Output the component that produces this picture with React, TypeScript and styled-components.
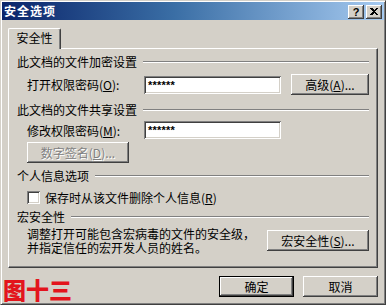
import styled, { createGlobalStyle } from "styled-components";

const FACE = "#d4d0c8";
const SHADOW = "#808080";
const DARK = "#404040";

const raised = `inset -1px -1px ${DARK}, inset 1px 1px #fff, inset -2px -2px ${SHADOW}, inset 2px 2px ${FACE}`;
const sunken = `inset 1px 1px ${SHADOW}, inset -1px -1px #fff, inset 2px 2px ${DARK}, inset -2px -2px ${FACE}`;

const GlobalStyle = createGlobalStyle`
  html, body {
    margin: 0;
    padding: 0;
    background: ${FACE};
  }

  * {
    box-sizing: border-box;
  }
`;

const Window = styled.div`
  width: 386px;
  height: 305px;
  overflow: hidden;
  background: ${FACE};
  border: 1px solid;
  border-color: ${FACE} ${DARK} ${DARK} ${FACE};
  box-shadow: inset 1px 1px #fff, inset -1px -1px ${SHADOW};
  padding: 1px;
  display: flex;
  flex-direction: column;
  font-family: "Noto Sans CJK SC", "Liberation Sans", sans-serif;
  font-size: 12px;
  color: #000;
`;

const TitleBar = styled.div`
  height: 18px;
  flex-shrink: 0;
  display: flex;
  align-items: flex-start;
  padding-left: 2px;
  padding-right: 2px;
  background: linear-gradient(to right, #0a246a 0%, #3a6ea5 45%, #a6caf0 100%);
`;

const Title = styled.span`
  color: #fff;
  font-weight: bold;
  font-size: 12px;
  letter-spacing: 1px;
  line-height: 18px;
`;

const CaptionButtons = styled.div`
  margin-left: auto;
  margin-top: 3px;
  display: flex;
  gap: 2px;
`;

const CaptionButton = styled.div`
  width: 16px;
  height: 14px;
  background: ${FACE};
  box-shadow: ${raised};
  display: flex;
  align-items: center;
  justify-content: center;
  font-family: "Liberation Sans", sans-serif;
  font-weight: bold;
  font-size: 11px;
  line-height: 14px;
  padding-bottom: 1px;
`;

const Body = styled.div`
  flex: 1;
  display: flex;
  flex-direction: column;
  padding: 0 6px;
`;

const TabStrip = styled.div`
  margin-top: 8px;
  display: flex;
  position: relative;
  z-index: 1;
`;

const Tab = styled.div`
  width: 53px;
  height: 21px;
  margin-bottom: -1px;
  background: ${FACE};
  border-top: 1px solid #fff;
  border-left: 1px solid #fff;
  border-right: 1px solid ${DARK};
  border-top-left-radius: 2px;
  border-top-right-radius: 2px;
  box-shadow: inset -1px 0 ${SHADOW};
  display: flex;
  justify-content: center;
  padding-top: 2px;
  line-height: 14px;
`;

const Panel = styled.div`
  height: 220px;
  border-top: 1px solid #fff;
  border-left: 1px solid #fff;
  border-right: 1px solid ${DARK};
  border-bottom: 1px solid ${DARK};
  box-shadow: inset -1px -1px ${SHADOW};
  padding: 6px 8px 0 8px;
  display: flex;
  flex-direction: column;
`;

const GroupHeader = styled.div<{ $gap: number }>`
  height: 14px;
  margin-top: ${(p) => p.$gap}px;
  display: flex;
  align-items: center;
  line-height: 14px;
  white-space: nowrap;
`;

const Etch = styled.div`
  flex: 1;
  height: 2px;
  margin-left: 6px;
  border-top: 1px solid ${SHADOW};
  border-bottom: 1px solid #fff;
`;

const Row = styled.div<{ $gap: number; $height: number }>`
  height: ${(p) => p.$height}px;
  margin-top: ${(p) => p.$gap}px;
  padding-left: 10px;
  display: flex;
  align-items: center;
`;

const Label = styled.span`
  width: 117px;
  flex-shrink: 0;
  white-space: nowrap;
`;

const PasswordBox = styled.div`
  width: 137px;
  height: 18px;
  background: #fff;
  box-shadow: ${sunken};
  padding-left: 4px;
  font-family: "Liberation Sans", sans-serif;
  font-weight: bold;
  font-size: 11px;
  letter-spacing: 0.2px;
  line-height: 19px;
`;

const Button = styled.button<{ $width: number; $default?: boolean }>`
  width: ${(p) => p.$width}px;
  height: 21px;
  flex-shrink: 0;
  margin: 0;
  padding: 0;
  background: ${FACE};
  border: ${(p) => (p.$default ? "1px solid #000" : "none")};
  box-shadow: ${raised};
  font-family: "Noto Sans CJK SC", "Liberation Sans", sans-serif;
  font-size: 12px;
  line-height: 14px;
  color: #000;
  white-space: nowrap;

  &:disabled {
    color: ${SHADOW};
    text-shadow: 1px 1px #fff;
  }
`;

const SideButton = styled(Button)`
  margin-left: 10px;
`;

const CheckBox = styled.div`
  width: 13px;
  height: 13px;
  flex-shrink: 0;
  background: #fff;
  box-shadow: ${sunken};
`;

const CheckLabel = styled.span`
  margin-left: 5px;
  line-height: 13px;
  white-space: nowrap;
`;

const MacroRow = styled.div`
  margin-top: 3px;
  padding-left: 10px;
  display: flex;
  align-items: flex-start;
  justify-content: space-between;
`;

const Description = styled.div`
  line-height: 14px;
  white-space: nowrap;
`;

const MacroButton = styled(Button)`
  margin-top: 3px;
`;

const Footer = styled.div`
  margin-top: 8px;
  display: flex;
  align-items: flex-start;
`;

const Caption = styled.span`
  margin-left: -5px;
  margin-top: 2px;
  color: #e3141c;
  font-family: "Noto Sans CJK SC", sans-serif;
  font-weight: 900;
  font-size: 23px;
  line-height: 23px;
`;

const FooterButtons = styled.div`
  margin-left: auto;
  display: flex;
  gap: 9px;
`;

const CloseGlyph = () => (
  <svg width="8" height="7" viewBox="0 0 8 7" shapeRendering="crispEdges">
    <path d="M0 0h2l2 2 2-2h2L5 3.5 8 7H6L4 5 2 7H0l3-3.5z" fill="#000" />
  </svg>
);

export default function App() {
  return (
    <>
      <GlobalStyle />
      <Window>
        <TitleBar>
          <Title>安全选项</Title>
          <CaptionButtons>
            <CaptionButton>?</CaptionButton>
            <CaptionButton>
              <CloseGlyph />
            </CaptionButton>
          </CaptionButtons>
        </TitleBar>
        <Body>
          <TabStrip>
            <Tab>安全性</Tab>
          </TabStrip>
          <Panel>
            <GroupHeader $gap={0}>
              此文档的文件加密设置
              <Etch />
            </GroupHeader>
            <Row $gap={5} $height={21}>
              <Label>
                打开权限密码(<u>O</u>):
              </Label>
              <PasswordBox>******</PasswordBox>
              <SideButton $width={78}>
                高级(<u>A</u>)...
              </SideButton>
            </Row>

            <GroupHeader $gap={8}>
              此文档的文件共享设置
              <Etch />
            </GroupHeader>
            <Row $gap={4} $height={18}>
              <Label>
                修改权限密码(<u>M</u>):
              </Label>
              <PasswordBox>******</PasswordBox>
            </Row>
            <Row $gap={3} $height={21}>
              <Button $width={102} disabled>
                数字签名(<u>D</u>)...
              </Button>
            </Row>

            <GroupHeader $gap={6}>
              个人信息选项
              <Etch />
            </GroupHeader>
            <Row $gap={8} $height={13}>
              <CheckBox />
              <CheckLabel>
                保存时从该文件删除个人信息(<u>R</u>)
              </CheckLabel>
            </Row>

            <GroupHeader $gap={6}>
              宏安全性
              <Etch />
            </GroupHeader>
            <MacroRow>
              <Description>
                调整打开可能包含宏病毒的文件的安全级，
                <br />
                并指定信任的宏开发人员的姓名。
              </Description>
              <MacroButton $width={102}>
                宏安全性(<u>S</u>)...
              </MacroButton>
            </MacroRow>
          </Panel>
          <Footer>
            <Caption>图十三</Caption>
            <FooterButtons>
              <Button $width={75} $default>
                确定
              </Button>
              <Button $width={75}>取消</Button>
            </FooterButtons>
          </Footer>
        </Body>
      </Window>
    </>
  );
}
